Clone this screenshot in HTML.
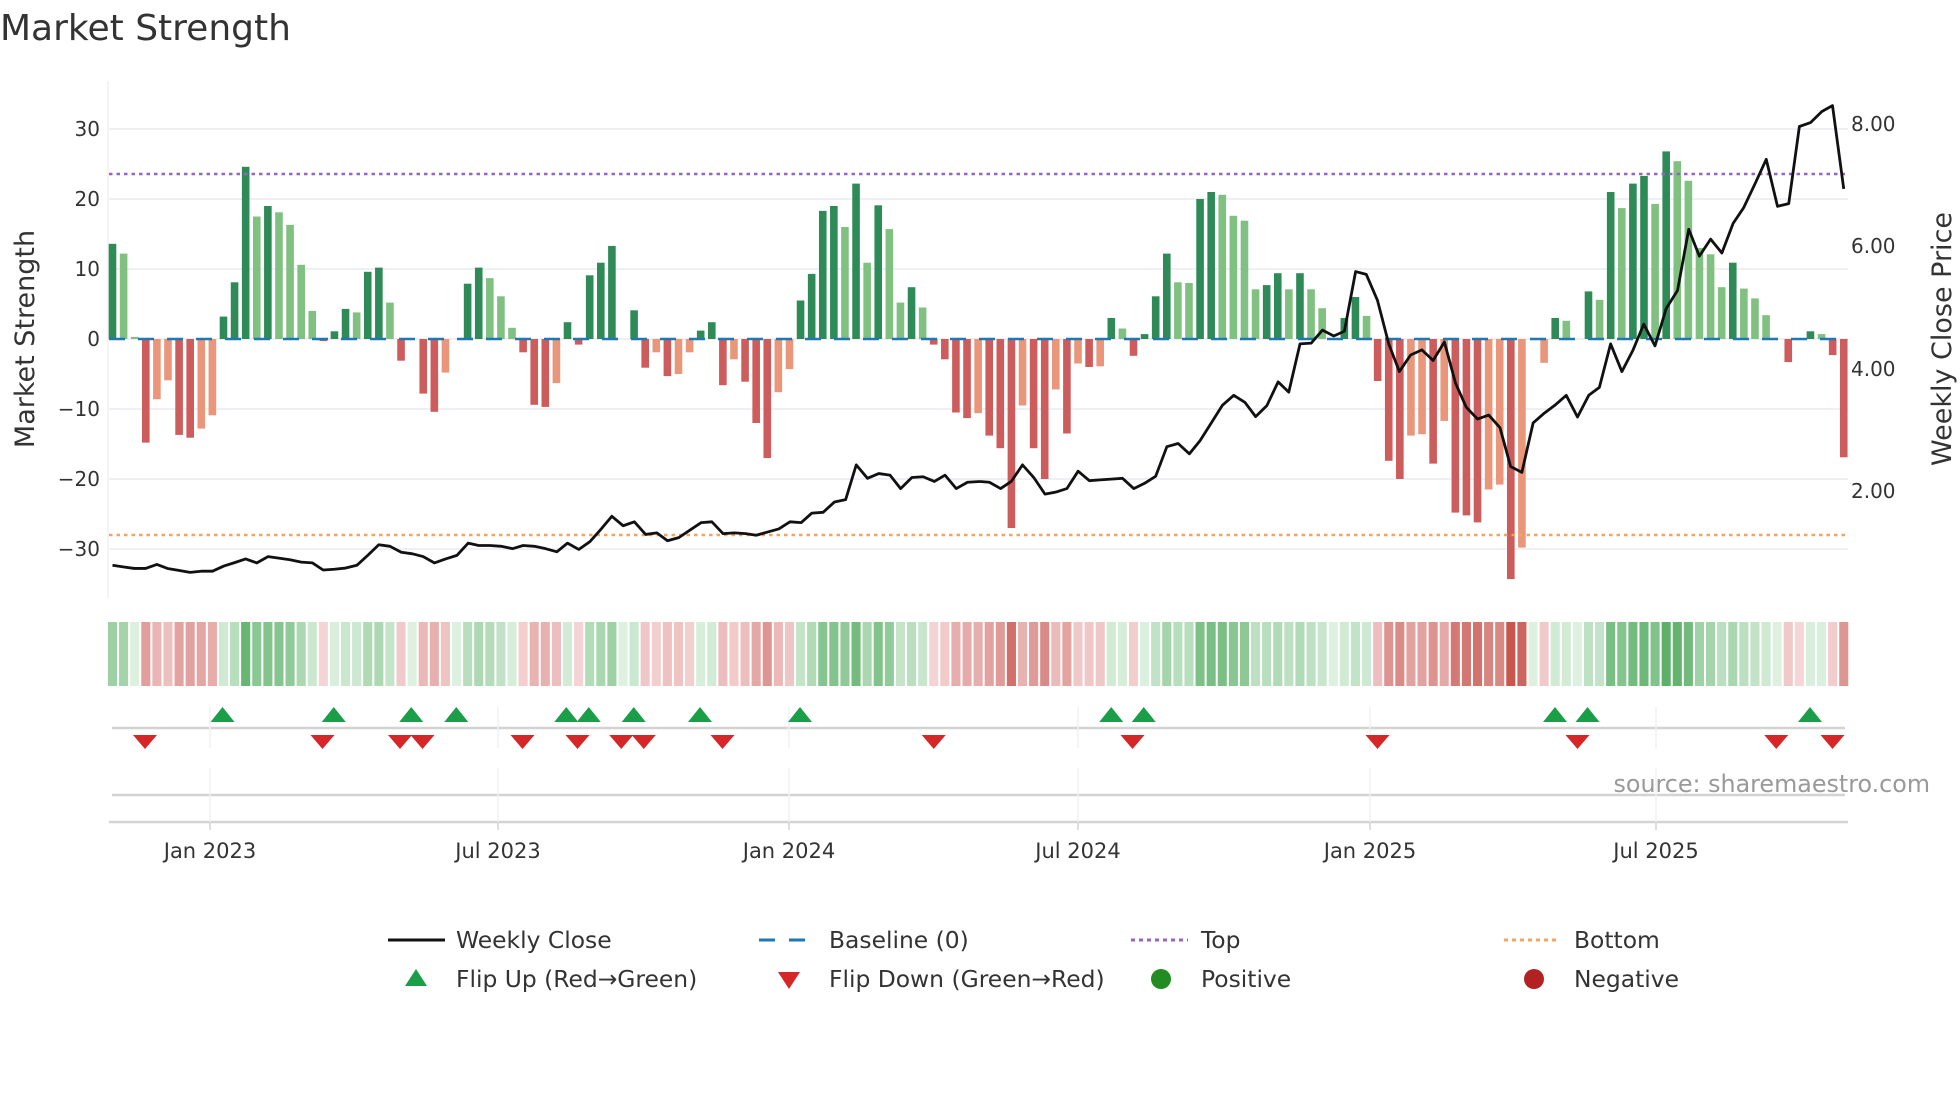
<!DOCTYPE html>
<html><head><meta charset="utf-8">
<style>
html,body{margin:0;padding:0;background:#fff;}
svg{display:block;font-family:"DejaVu Sans","Liberation Sans",sans-serif;}
</style></head>
<body>
<svg id="s" width="1960" height="1102" viewBox="0 0 1960 1102" xmlns="http://www.w3.org/2000/svg">
<rect width="1960" height="1102" fill="#fff"/>
<text x="0" y="40" font-size="36" fill="#333">Market Strength</text>
<g id="grid"></g>
<line x1="108" y1="81" x2="108" y2="598" stroke="#eef0f4" stroke-width="1.5"/>
<g id="bars"></g>
<line x1="109" y1="339" x2="1848" y2="339" stroke="#1f77b4" stroke-width="2.5" stroke-dasharray="16 13"/>
<line x1="109" y1="174" x2="1848" y2="174" stroke="#9467bd" stroke-width="2.5" stroke-dasharray="3.5 4"/>
<line x1="109" y1="535" x2="1848" y2="535" stroke="#f4a460" stroke-width="2.5" stroke-dasharray="3.5 4"/>
<g transform="scale(0.625,0.3953)"><polyline fill="none" stroke="#111" stroke-width="2.8" vector-effect="non-scaling-stroke" stroke-linejoin="round" points="180,1430 197,1434 215,1438 233,1438 251,1428 268,1438 286,1443 304,1448 322,1445 340,1445 358,1432 376,1423 393,1414 411,1424 429,1408 446,1412 464,1416 482,1422 500,1424 517,1442 535,1440 553,1437 571,1430 589,1404 606,1378 624,1382 642,1397 660,1401 677,1408 695,1424 713,1414 731,1405 749,1374 766,1380 784,1380 802,1382 820,1388 837,1380 855,1382 873,1388 891,1396 908,1374 926,1390 944,1370 962,1338 979,1306 997,1330 1015,1320 1033,1352 1051,1348 1068,1368 1086,1360 1104,1341 1122,1322 1139,1320 1157,1350 1175,1348 1193,1350 1210,1354 1228,1346 1246,1338 1264,1320 1282,1322 1299,1298 1317,1296 1335,1270 1353,1264 1370,1176 1388,1210 1406,1198 1424,1202 1441,1236 1459,1208 1477,1206 1495,1218 1512,1202 1530,1236 1548,1220 1568,1218"/></g>
<g transform="translate(980,0) scale(0.625,0.3953)"><polyline fill="none" stroke="#111" stroke-width="2.8" vector-effect="non-scaling-stroke" stroke-linejoin="round" points="0,1218 15,1220 33,1236 50,1218 68,1176 86,1208 104,1250 121,1245 139,1236 157,1192 175,1216 192,1214 210,1212 228,1210 246,1236 264,1222 281,1205 299,1130 317,1122 335,1148 352,1115 370,1070 388,1025 406,1000 424,1018 441,1054 459,1026 477,966 494,992 512,870 530,868 548,835 566,850 583,838 601,687 618,694 636,760 654,870 671,940 689,898 707,885 725,912 743,865 761,970 778,1030 796,1060 814,1050 832,1082 849,1180 867,1195 885,1070 903,1045 920,1025 938,1000 956,1055 974,1000 991,980 1009,870 1027,940 1045,885 1062,820 1080,875 1098,780 1116,735 1134,580 1151,648 1169,605 1187,640 1205,565 1222,525 1240,465 1258,403 1276,522 1294,515 1311,320 1329,310 1347,282 1364,267 1382,478"/></g>
<g id="axes" font-size="20" fill="#333"></g>
<text transform="translate(34,339) rotate(-90)" text-anchor="middle" font-size="27" fill="#333">Market Strength</text>
<text transform="translate(1951,339) rotate(-90)" text-anchor="middle" font-size="27" fill="#333">Weekly Close Price</text>
<g id="strip"></g>
<g id="low"></g>
<text x="1930" y="792" text-anchor="end" font-size="23.8" fill="#999">source: sharemaestro.com</text>
<g font-size="23.4" fill="#333">
<line x1="388" y1="940" x2="445" y2="940" stroke="#111" stroke-width="3"/>
<text x="456" y="948">Weekly Close</text>
<line x1="759" y1="940" x2="815" y2="940" stroke="#1f77b4" stroke-width="3" stroke-dasharray="16 14"/>
<text x="829" y="948">Baseline (0)</text>
<line x1="1131" y1="940" x2="1188" y2="940" stroke="#9467bd" stroke-width="3" stroke-dasharray="4 4"/>
<text x="1201" y="948">Top</text>
<line x1="1504" y1="940" x2="1560" y2="940" stroke="#f4a460" stroke-width="3" stroke-dasharray="4 4"/>
<text x="1574" y="948">Bottom</text>
<polygon points="416,969 427,986 405,986" fill="#1a9e47"/>
<text x="456" y="987">Flip Up (Red→Green)</text>
<polygon points="778,972 800,972 789,989" fill="#d62728"/>
<text x="829" y="987">Flip Down (Green→Red)</text>
<circle cx="1161" cy="979" r="10" fill="#228b22"/>
<text x="1201" y="987">Positive</text>
<circle cx="1534" cy="979" r="10" fill="#b22222"/>
<text x="1574" y="987">Negative</text>
</g>
</svg>
<script>
var NS="http://www.w3.org/2000/svg";
function el(p,t,a,txt){var e=document.createElementNS(NS,t);for(var k in a)e.setAttribute(k,a[k]);if(txt!==undefined)e.textContent=txt;document.getElementById(p).appendChild(e);return e;}
var V=[[13.6,'D'],[12.2,'L'],[0.3,'L'],[-14.8,'R'],[-8.6,'r'],[-5.9,'r'],[-13.7,'R'],[-14.1,'R'],[-12.8,'r'],[-10.9,'r'],[3.2,'D'],[8.1,'D'],[24.6,'D'],[17.5,'L'],[19,'D'],[18.1,'L'],[16.3,'L'],[10.6,'L'],[4,'L'],[-0.3,'R'],[1.1,'D'],[4.3,'D'],[3.8,'L'],[9.6,'D'],[10.2,'D'],[5.2,'L'],[-3.1,'R'],[0,''],[-7.8,'R'],[-10.4,'R'],[-4.8,'r'],[0,''],[7.9,'D'],[10.2,'D'],[8.7,'L'],[6.1,'L'],[1.6,'L'],[-1.9,'R'],[-9.4,'R'],[-9.7,'R'],[-6.3,'r'],[2.4,'D'],[-0.8,'R'],[9.1,'D'],[10.9,'D'],[13.3,'D'],[0,''],[4.1,'D'],[-4.1,'R'],[-1.9,'r'],[-5.3,'R'],[-5,'r'],[-1.9,'r'],[1.2,'D'],[2.4,'D'],[-6.6,'R'],[-2.9,'r'],[-6.1,'R'],[-12,'R'],[-17,'R'],[-7.6,'r'],[-4.3,'r'],[5.5,'D'],[9.3,'D'],[18.3,'D'],[19,'D'],[16,'L'],[22.2,'D'],[10.9,'L'],[19.1,'D'],[15.7,'L'],[5.2,'L'],[7.4,'D'],[4.5,'L'],[-0.8,'R'],[-2.9,'R'],[-10.5,'R'],[-11.3,'R'],[-10.6,'r'],
[-13.8,'R'],[-15.6,'R'],[-27,'R'],[-9.5,'r'],[-15.6,'R'],[-20,'R'],[-7.2,'r'],[-13.5,'R'],[-3.5,'r'],[-4,'R'],[-3.9,'r'],[3,'D'],[1.5,'L'],[-2.4,'R'],[0.7,'D'],[6.1,'D'],[12.2,'D'],[8.1,'L'],[8,'L'],[20,'D'],[21,'D'],[20.6,'L'],[17.6,'L'],[16.9,'L'],[7.1,'L'],[7.7,'D'],[9.4,'D'],[7.1,'L'],[9.4,'D'],[7.1,'L'],[4.4,'L'],[0,''],[3,'D'],[6,'D'],[3.3,'L'],[-6,'R'],[-17.4,'R'],[-20,'R'],[-13.8,'r'],[-13.6,'r'],[-17.8,'R'],[-11.7,'r'],[-24.8,'R'],[-25.2,'R'],[-26.2,'R'],[-21.5,'r'],[-20.8,'r'],[-34.3,'R'],[-29.8,'r'],[0,''],[-3.4,'r'],[3,'D'],[2.6,'L'],[0,''],[6.8,'D'],[5.6,'L'],[21,'D'],[18.7,'L'],[22.2,'D'],[23.3,'D'],[19.3,'L'],[26.8,'D'],[25.4,'L'],[22.6,'L'],[13,'L'],[12.1,'L'],[7.4,'L'],[10.9,'D'],[7.2,'L'],[5.8,'L'],[3.4,'L'],[0,''],[-3.3,'R'],[-0.1,'R'],[1.1,'D'],[0.7,'L'],[-2.3,'R'],[-16.9,'R']];
var C={D:'#2e8b57',L:'#80c080',R:'#cd5c5c',r:'#e9967a'};
var n=V.length,x0=112.5,dx=(1843.75-112.5)/(n-1);
for(var g=-30;g<=30;g+=10){var y=339-g*7;el('grid','line',{x1:109,y1:y,x2:1848,y2:y,stroke:'#eef0f4','stroke-width':2});
el('axes','text',{x:100,y:y+7,'text-anchor':'end'},(g<0?'\u2212':'')+Math.abs(g));}
[['8.00',124],['6.00',246],['4.00',369],['2.00',491]].forEach(function(a){el('axes','text',{x:1851,y:a[1]+7},a[0]);});
function lerp(a,b,t){var r=[];for(var i=0;i<3;i++){r.push(Math.round(a[i]+(b[i]-a[i])*t));}return 'rgb('+r.join(',')+')';}
for(var i=0;i<n;i++){var v=V[i][0],x=x0+i*dx;
 if(v!==0&&V[i][1]){var y1=339,y2=339-v*7;el('bars','rect',{x:x-3.8,y:Math.min(y1,y2),width:7.6,height:Math.abs(y2-y1),fill:C[V[i][1]]});}
 var col;if(v>=0){col=lerp([222,241,225],[92,176,104],Math.min(v/27,1));}else{col=lerp([244,214,214],[200,86,79],Math.min(-v/34,1));}
 el('strip','rect',{x:x-dx/2+1,y:622,width:dx-2,height:64,fill:col});
}
el('low','line',{x1:112,y1:728,x2:1845,y2:728,stroke:'#d3d3d3','stroke-width':2.5});
el('low','line',{x1:112,y1:795,x2:1845,y2:795,stroke:'#d3d3d3','stroke-width':2.5});
el('low','line',{x1:109,y1:822,x2:1848,y2:822,stroke:'#d3d3d3','stroke-width':2.5});
[['Jan 2023',210],['Jul 2023',498],['Jan 2024',789],['Jul 2024',1078],['Jan 2025',1370],['Jul 2025',1656]].forEach(function(a){
 el('low','line',{x1:a[1],y1:707,x2:a[1],y2:748,stroke:'#eef0f4','stroke-width':1.5});
 el('low','line',{x1:a[1],y1:768,x2:a[1],y2:822,stroke:'#eef0f4','stroke-width':1.5});
 el('low','line',{x1:a[1],y1:822,x2:a[1],y2:830,stroke:'#d3d3d3','stroke-width':1.5});
 el('low','text',{x:a[1],y:858,'text-anchor':'middle','font-size':21,fill:'#333'},a[0]);});
[178,267,329,365,453,471,507,560,640,889,915,1244,1270,1448].forEach(function(d){var x=d*1.25;el('low','polygon',{points:(x)+',707 '+(x+12)+',722 '+(x-12)+',722',fill:'#1a9e47'});});
[116,258,320,338,418,462,497,515,578,747,906,1102,1262,1421,1466].forEach(function(d){var x=d*1.25;el('low','polygon',{points:(x-12)+',735 '+(x+12)+',735 '+x+',749',fill:'#d62728'});});
</script>
</body></html>
